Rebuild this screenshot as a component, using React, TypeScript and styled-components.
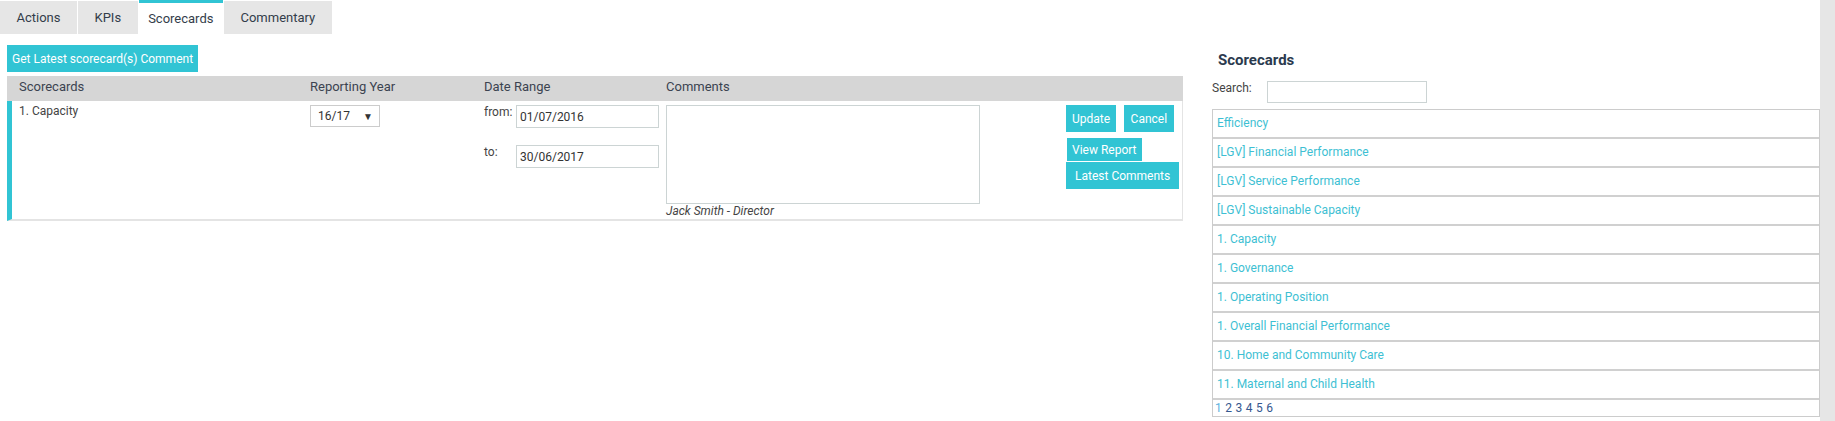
import React from "react";
import styled, { createGlobalStyle } from "styled-components";

const TEAL = "#31c4d4";

const GlobalStyle = createGlobalStyle`
  html, body {
    margin: 0;
    padding: 0;
    background: #fff;
  }
  body {
    font-family: Roboto, "Liberation Sans", Arial, sans-serif;
    color: #3b4350;
  }
  * {
    box-sizing: border-box;
  }
`;

const tabs = ["Actions", "KPIs", "Scorecards", "Commentary"];

const scorecards = [
  "Efficiency",
  "[LGV] Financial Performance",
  "[LGV] Service Performance",
  "[LGV] Sustainable Capacity",
  "1. Capacity",
  "1. Governance",
  "1. Operating Position",
  "1. Overall Financial Performance",
  "10. Home and Community Care",
  "11. Maternal and Child Health",
];

const App = () => {
  return (
    <>
      <GlobalStyle />
      <Page>
        <Main>
          <TabBar>
            {tabs.map((t) => (
              <Tab key={t} $active={t === "Scorecards"}>
                {t}
              </Tab>
            ))}
          </TabBar>
          <Content>
            <LeftPane>
              <ActionButton $pad="5px">Get Latest scorecard(s) Comment</ActionButton>
              <Table>
                <HeaderRow>
                  <HeaderCell>Scorecards</HeaderCell>
                  <HeaderCell>Reporting Year</HeaderCell>
                  <HeaderCell>Date Range</HeaderCell>
                  <HeaderCell>Comments</HeaderCell>
                  <HeaderCell />
                </HeaderRow>
                <BodyRow>
                  <NameCell>1. Capacity</NameCell>
                  <Cell>
                    <SelectBox>
                      <span>16/17</span>
                      <Caret>▼</Caret>
                    </SelectBox>
                  </Cell>
                  <Cell>
                    <DateField>
                      <DateLabel>from:</DateLabel>
                      <DateInput readOnly value="01/07/2016" />
                    </DateField>
                    <DateField $gap={17}>
                      <DateLabel>to:</DateLabel>
                      <DateInput readOnly value="30/06/2017" />
                    </DateField>
                  </Cell>
                  <CommentCell>
                    <CommentBox readOnly value="" />
                    <Author>Jack Smith - Director</Author>
                  </CommentCell>
                  <Cell>
                    <ButtonRow>
                      <ActionButton $pad="6px">Update</ActionButton>
                      <ActionButton $pad="6.5px">Cancel</ActionButton>
                    </ButtonRow>
                    <ActionButton $pad="5px" $height={23} $mt={6} $ml={1}>
                      View Report
                    </ActionButton>
                    <ActionButton $pad="9px" $mt={1}>
                      Latest Comments
                    </ActionButton>
                  </Cell>
                </BodyRow>
              </Table>
            </LeftPane>
            <RightPane>
              <PanelTitle>Scorecards</PanelTitle>
              <SearchRow>
                <SearchLabel>Search:</SearchLabel>
                <SearchInput />
              </SearchRow>
              <CardList>
                {scorecards.map((s) => (
                  <CardItem key={s}>{s}</CardItem>
                ))}
                <Pager>
                  {[1, 2, 3, 4, 5, 6].map((n) => (
                    <PageLink key={n} $current={n === 1}>
                      {n}
                    </PageLink>
                  ))}
                </Pager>
              </CardList>
            </RightPane>
          </Content>
        </Main>
        <ScrollTrack />
      </Page>
    </>
  );
};

export default App;

const Page = styled.div`
  display: flex;
  width: 1835px;
  height: 421px;
  overflow: hidden;
`;

const Main = styled.div`
  flex: 1;
  display: flex;
  flex-direction: column;
  min-width: 0;
`;

const ScrollTrack = styled.div`
  width: 15px;
  flex-shrink: 0;
  background: #e6e6e6;
`;

const TabBar = styled.div`
  display: flex;
  gap: 1px;
  height: 34px;
`;

const Tab = styled.div<{ $active?: boolean }>`
  display: flex;
  align-items: center;
  padding: ${({ $active }) => ($active ? "0 9.5px" : "0 16.5px")};
  margin-top: ${({ $active }) => ($active ? "0" : "1px")};
  border-top: ${({ $active }) => ($active ? `3px solid ${TEAL}` : "none")};
  background: ${({ $active }) => ($active ? "#fff" : "#e6e6e6")};
  font-size: 13px;
  color: #333d4a;
`;

const Content = styled.div`
  display: flex;
  flex: 1;
`;

const LeftPane = styled.div`
  width: 1183px;
  flex-shrink: 0;
  padding: 11px 0 0 7px;
`;

const ActionButton = styled.button<{ $pad: string; $height?: number; $mt?: number; $ml?: number }>`
  display: block;
  height: ${({ $height }) => $height ?? 27}px;
  padding: 0 ${({ $pad }) => $pad};
  margin: ${({ $mt }) => $mt ?? 0}px 0 0 ${({ $ml }) => $ml ?? 0}px;
  border: none;
  border-radius: 0;
  background: ${TEAL};
  color: #fff;
  font-family: Roboto, "Liberation Sans", Arial, sans-serif;
  font-size: 12px;
  line-height: 1;
  white-space: nowrap;
  cursor: pointer;
`;

const Table = styled.div`
  margin-top: 4px;
  width: 1176px;
`;

const columns = "291px 174px 182px 400px 1fr";

const HeaderRow = styled.div`
  display: grid;
  grid-template-columns: ${columns};
  height: 25px;
  padding-left: 5px;
  background: #d6d6d6;
`;

const HeaderCell = styled.div`
  padding: 3px 0 0 7px;
  font-size: 13px;
  line-height: 16px;
  color: #3b4350;
`;

const BodyRow = styled.div`
  display: grid;
  grid-template-columns: ${columns};
  border-left: 5px solid ${TEAL};
  border-right: 1px solid #e4e4e4;
  border-bottom: 2px solid #e4e4e4;
`;

const Cell = styled.div`
  padding: 4px 0 0 7px;
  font-size: 12px;
  color: #444;
`;

const NameCell = styled(Cell)`
  padding-top: 3px;
  line-height: 14px;
`;

const SelectBox = styled.div`
  display: flex;
  align-items: center;
  justify-content: space-between;
  width: 70px;
  height: 22px;
  padding: 0 6px 0 7px;
  border: 1px solid #cccccc;
  font-size: 12px;
  color: #333;
`;

const Caret = styled.span`
  font-size: 10px;
  color: #333;
`;

const DateField = styled.div<{ $gap?: number }>`
  display: flex;
  align-items: flex-start;
  margin-top: ${({ $gap }) => $gap ?? 0}px;
`;

const DateLabel = styled.span`
  width: 32px;
  font-size: 12px;
  line-height: 14px;
  color: #444;
`;

const DateInput = styled.input`
  width: 143px;
  height: 23px;
  padding: 0 3px;
  border: 1px solid #ccd4d4;
  border-radius: 0;
  outline: none;
  font-family: Roboto, "Liberation Sans", Arial, sans-serif;
  font-size: 12px;
  color: #333;
`;

const CommentCell = styled(Cell)`
  padding-bottom: 1px;
`;

const CommentBox = styled.textarea`
  display: block;
  width: 314px;
  height: 99px;
  margin: 0;
  border: 1px solid #ccd4d4;
  border-radius: 0;
  resize: none;
  outline: none;
`;

const Author = styled.div`
  font-size: 12px;
  line-height: 14px;
  font-style: italic;
  color: #444;
`;

const ButtonRow = styled.div`
  display: flex;
  gap: 8px;
`;

const RightPane = styled.div`
  flex: 1;
  margin-left: 29px;
  padding-top: 16px;
`;

const PanelTitle = styled.div`
  padding-left: 6px;
  font-size: 15px;
  font-weight: 700;
  line-height: 20px;
  color: #2b3a4e;
`;

const SearchRow = styled.div`
  display: flex;
  align-items: flex-start;
  margin-top: 11px;
`;

const SearchLabel = styled.span`
  width: 55px;
  font-size: 12px;
  line-height: 14px;
  color: #444;
`;

const SearchInput = styled.input`
  width: 160px;
  height: 22px;
  border: 1px solid #ccd4d4;
  border-radius: 0;
  outline: none;
`;

const CardList = styled.div`
  margin-top: 6px;
  border: 1px solid #cccccc;
`;

const CardItem = styled.div`
  height: 29px;
  padding-left: 4px;
  border-bottom: 2px solid #d0d0d0;
  font-size: 12px;
  line-height: 27px;
  color: #3ebfd3;
`;

const Pager = styled.div`
  display: flex;
  gap: 3.5px;
  height: 16px;
  padding-left: 2px;
  font-size: 12px;
  line-height: 16px;
`;

const PageLink = styled.span<{ $current?: boolean }>`
  color: ${({ $current }) => ($current ? "#5fb2e0" : "#35588f")};
`;
